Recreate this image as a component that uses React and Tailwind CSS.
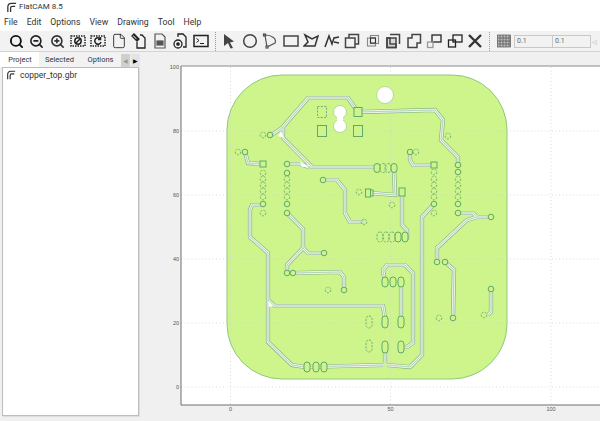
import React from "react";
import { Search, ZoomIn, ZoomOut, File } from "lucide-react";

/* ---------------- Board data (page coordinates) ---------------- */
const traces = [
  "270,136 282,128 308,98 348,98 358,112 435,110 443,120 441,140 458,157 458,165",
  "283,127 283,138 312,167 377,167",
  "394,168 395,195 370,193",
  "245,152 248,163 262,164",
  "263,205 252,205 250,210 250,237 268,253 268,342 292,365 305,367 383,365",
  "387,365 410,367 422,355 422,217 433,205",
  "268,300 275,306 383,306 385,318",
  "287,164 300,164 309,167",
  "323,180 337,180 345,190 345,213 350,222 364,222",
  "287,213 303,229 303,248 287,265 287,273",
  "303,248 308,253 324,253",
  "293,273 340,272 344,277 344,290",
  "402,192 402,225 407,230 407,240",
  "385,282 383,270 387,265 405,265 413,273 413,343 407,347 400,347",
  "401,282 401,322",
  "385,347 385,363",
  "458,213 473,213 477,217 491,217",
  "477,217 467,220 437,248 437,262",
  "445,262 454,270 453,318",
  "491,289 491,312 488,315",
  "410,152 410,160 413,165 433,165",
];

const solidPads = [
  [270, 135], [245, 152], [287, 164], [287, 173], [287, 204], [287, 213], [263, 204],
  [323, 180], [458, 165], [458, 172], [458, 204], [458, 213], [491, 217],
  [434, 204], [410, 152], [287, 273], [293, 273], [324, 253], [344, 290], [437, 262],
  [445, 262], [453, 318], [491, 289],
];

const dashedPads = [
  [263, 135], [238, 152], [263, 173], [263, 179], [263, 185], [263, 191], [263, 197], [263, 213],
  [287, 179], [287, 185], [287, 191], [287, 197], [434, 172], [434, 179], [434, 185], [434, 191],
  [434, 197], [434, 213], [458, 179], [458, 185], [458, 191], [458, 197], [448, 136], [416, 152],
  [364, 222], [359, 192], [392, 205], [328, 290], [439, 318], [484, 315],
];

// x, y, height
const solidOvals = [
  [307, 367, 10], [316, 367, 10], [324, 367, 10], [377, 168, 9], [394, 168, 9],
  [398, 237, 10], [405, 237, 10], [385, 282, 10], [393, 282, 10], [401, 282, 10],
  [385, 322, 12], [401, 322, 12], [385, 347, 12], [401, 347, 12],
];

const dashedOvals = [
  [380, 237, 10], [386, 237, 10], [392, 237, 10], [383, 168, 9], [388, 168, 9],
  [369, 322, 12], [369, 346, 12],
];

const rects = [
  [322, 131, 9, 11], [358, 131, 9, 11], [358, 112, 8, 9], [263, 164, 6, 6], [434, 165, 6, 6],
  [370, 193, 6, 6], [402, 192, 6, 8], [368, 193, 5, 8],
];

const gridX = [230.5, 390.5, 551];
const gridY = [131, 195, 259, 323, 387];

/* ---------------- Plot ---------------- */
function Plot() {
  return (
    <svg viewBox="141 52 459 369" className="h-[369px] w-[459px] shrink-0">
      <rect x="181" y="66" width="419" height="339" fill="#ffffff" />
      <path
        d="M282 75H452A55 55 0 0 1 507 130V324A55 55 0 0 1 452 379H282A55 55 0 0 1 227 324V130A55 55 0 0 1 282 75Z"
        fill="#cdf58c"
        stroke="#90c97c"
        strokeWidth="1"
      />
      <g stroke="#d0d0d0" strokeWidth="0.8" strokeDasharray="1 2.5" fill="none">
        {gridX.map((x) => (
          <path key={x} d={`M${x} 67V405`} />
        ))}
        {gridY.map((y) => (
          <path key={y} d={`M181 ${y}H600`} />
        ))}
      </g>

      {/* mounting holes */}
      <circle cx="385" cy="95" r="8.5" fill="#ffffff" stroke="#9ccf86" strokeWidth="0.7" />
      <circle cx="340" cy="112" r="6.5" fill="#ffffff" stroke="#9ccf86" strokeWidth="0.7" />
      <circle cx="340" cy="126" r="6.5" fill="#ffffff" stroke="#9ccf86" strokeWidth="0.7" />
      <rect x="337" y="117" width="6" height="4" fill="#ffffff" />

      {/* copper isolation */}
      <g fill="none" strokeLinejoin="miter">
        {traces.map((t) => (
          <polyline key={t} points={t} stroke="#7fb085" strokeWidth="4.2" />
        ))}
        {traces.map((t) => (
          <polyline key={t} points={t} stroke="#eef7e6" strokeWidth="2.9" />
        ))}
        {traces.map((t) => (
          <polyline key={t} points={t} stroke="#a4c6a8" strokeWidth="0.8" />
        ))}
      </g>
      <g fill="#ffffff">
        <path d="M281 131L284 138 278 136Z" />
        <path d="M300 161L308 167 302 167Z" />
        <path d="M268 301L273 306 269 307Z" />
      </g>

      <g fill="#cdf58c" stroke="#63a867" strokeWidth="1">
        {rects.map(([x, y, w, h]) => (
          <rect key={`${x}-${y}`} x={x - w / 2} y={y - h / 2} width={w} height={h} />
        ))}
        {solidPads.map(([x, y]) => (
          <circle key={`${x}-${y}`} cx={x} cy={y} r="2.8" />
        ))}
        {solidOvals.map(([x, y, h]) => (
          <rect key={`${x}-${y}`} x={x - 3} y={y - h / 2} width="6" height={h} rx="3" />
        ))}
      </g>
      <g fill="none" stroke="#6fae72" strokeWidth="1" strokeDasharray="2 1.4">
        {dashedPads.map(([x, y]) => (
          <circle key={`${x}-${y}`} cx={x} cy={y} r="2.8" />
        ))}
        {dashedOvals.map(([x, y, h]) => (
          <rect key={`${x}-${y}`} x={x - 3} y={y - h / 2} width="6" height={h} rx="3" />
        ))}
        <rect x="317.5" y="106.5" width="9" height="11" />
      </g>

      {/* axes */}
      <path d="M181 66V405H600" fill="none" stroke="#6e6e6e" strokeWidth="1" />
      <path d="M181 66H600" fill="none" stroke="#8a8a8a" strokeWidth="1" />
      <g fill="#555555" fontSize="5.5" fontFamily="'Liberation Sans', sans-serif">
        {[["100", 67], ["80", 131], ["60", 195], ["40", 259], ["20", 323], ["0", 387]].map(([l, y]) => (
          <text key={l} x="179" y={y + 2} textAnchor="end">{l}</text>
        ))}
        {[["0", 230.5], ["50", 390.5], ["100", 551]].map(([l, x]) => (
          <text key={l} x={x} y="411" textAnchor="middle">{l}</text>
        ))}
      </g>
    </svg>
  );
}

/* ---------------- Toolbar glyphs ---------------- */
const Svg = ({ children, s = 1.5, c = "#222222" }) => (
  <svg viewBox="0 0 16 16" className="h-4 w-4" fill="none" stroke={c} strokeWidth={s}>
    {children}
  </svg>
);

const tools = [
  <Search key="z" size={15} strokeWidth={3} color="#111111" />,
  <ZoomOut key="zo" size={15} strokeWidth={2.6} color="#222222" />,
  <ZoomIn key="zi" size={15} strokeWidth={2.6} color="#333333" />,
  <Svg key="r1">
    <rect x="1" y="3" width="14" height="10" strokeDasharray="1.5 1" />
    <circle cx="8" cy="8" r="3.2" />
    <path d="M6 10l4-4" />
  </Svg>,
  <Svg key="r2">
    <rect x="1" y="3" width="14" height="10" strokeDasharray="1.5 1" />
    <path d="M10.5 6A3.2 3.2 0 1 0 11 9M10.5 4v2.5H8" />
  </Svg>,
  <File key="f" size={16} strokeWidth={1.3} color="#222222" />,
  <Svg key="e" s={1.3}>
    <path d="M6 4V15H14V5L11 2H9M2 1l6 6M1 3l2-2 5 5-2 2Z" />
  </Svg>,
  <Svg key="o" s={1.2} c="#555555">
    <path d="M3 1H10L13 4V15H3Z" />
    <rect x="5" y="8" width="6" height="4" fill="#555555" />
  </Svg>,
  <Svg key="c" s={1.3}>
    <path d="M6 4V1H11L14 4V14H11" />
    <circle cx="6" cy="11" r="4" />
    <circle cx="6" cy="11" r="1.2" fill="#222222" />
  </Svg>,
  <Svg key="t">
    <rect x="1" y="2.5" width="14" height="11" />
    <path d="M3.5 5.5L6 7.5 3.5 9.5M7 10.5H11" strokeWidth="1" />
  </Svg>,
];

const drawTools = [
  <svg key="a" viewBox="0 0 16 16" className="h-4 w-4"><path d="M3 1L13 8.5 9 9.5 12 15 9.5 15.5 7 10 3 13Z" fill="#444444" /></svg>,
  <Svg key="ci" c="#444444"><circle cx="8" cy="8" r="6.3" /></Svg>,
  <Svg key="ar" s={1.2} c="#555555">
    <path d="M3 2C10 2 15 6 13 10L5 14Z" />
    <rect x="1.5" y="1" width="2" height="2" fill="#ffffff" />
    <rect x="4" y="13" width="2" height="2" fill="#ffffff" />
  </Svg>,
  <Svg key="re" c="#444444"><rect x="1" y="3" width="14" height="10" /></Svg>,
  <Svg key="po" c="#333333"><path d="M2 2L9 6 15 3 12 13H1L5 9Z" /></Svg>,
  <Svg key="pa" c="#333333"><path d="M1 14L5 3 8 11 10 5 15 4M10 9L15 10" /></Svg>,
  <Svg key="u" c="#444444"><path d="M5 5V1.5H14.5V11H11M1.5 5H11V14.5H1.5Z" /></Svg>,
  <Svg key="i" s={1.1} c="#888888"><rect x="2.5" y="5" width="8" height="8" /><rect x="5.5" y="2.5" width="8" height="8" /><rect x="5.5" y="5" width="5" height="5" stroke="#333333" /></Svg>,
  <Svg key="s" c="#444444"><rect x="2" y="5" width="9" height="9.5" fill="#d8d8d8" /><path d="M2 5H5V11H11V14.5H2ZM5 1.5H14.5V11" /></Svg>,
  <Svg key="s2" c="#444444"><path d="M2 5H6V1.5H14.5V10H11V14.5H2Z" /></Svg>,
  <Svg key="co" s={1.3}><rect x="6" y="2" width="9" height="7" /><rect x="1.5" y="9" width="5.5" height="5.5" stroke="#999999" /></Svg>,
  <Svg key="co2" s={1.3}><rect x="6" y="2" width="9" height="7" /><rect x="1.5" y="7" width="7" height="7" /></Svg>,
  <Svg key="x" s={2.4} c="#333333"><path d="M2 2L14 14M14 2L2 14" /></Svg>,
];

const Logo = ({ className }) => (
  <svg viewBox="0 0 12 12" className={className} fill="none" stroke="#333333" strokeWidth="1.4">
    <path d="M2 11V5.5C2 3 3.5 1.5 6 1.5H11M5 11V6.5C5 5.3 5.6 4.7 7 4.7H10" />
  </svg>
);

const ToolBtn = ({ children }) => (
  <div className="flex h-full w-[20.5px] shrink-0 items-center justify-center">{children}</div>
);

const Sep = () => <div className="mx-[3.5px] h-[19px] w-px shrink-0 border-l border-dotted border-[#999999]" />;

export default function App() {
  return (
    <div
      className="flex h-[421px] w-[600px] flex-col overflow-hidden bg-[#f0f0f0] text-[#333333]"
      style={{ fontFamily: "Roboto, 'Noto Sans', sans-serif" }}
    >
      {/* ---------- Title ---------- */}
      <div className="flex h-[14px] items-center gap-[2px] bg-white pl-[6px] text-[8px]">
        <Logo className="h-[11px] w-[11px]" />
        <span>FlatCAM 8.5</span>
      </div>

      {/* ---------- Menu ---------- */}
      <div className="flex h-[17px] items-center gap-[9px] bg-white pl-[4px] text-[8.7px]">
        {["File", "Edit", "Options", "View", "Drawing", "Tool", "Help"].map((m) => (
          <span key={m}>{m}</span>
        ))}
      </div>

      {/* ---------- Toolbar ---------- */}
      <div className="flex h-[21px] items-center border-b border-[#d4d4d4] bg-[#f2f2f2] pl-[6px]">
        {tools.map((t, i) => (
          <ToolBtn key={i}>{t}</ToolBtn>
        ))}
        <Sep />
        {drawTools.map((t, i) => (
          <ToolBtn key={i}>{t}</ToolBtn>
        ))}
        <Sep />
        <ToolBtn>
          <Svg s={0.7} c="#555555">
            <rect x="1.5" y="2" width="13" height="12" fill="#bbbbbb" />
            <path d="M4 2V14M7 2V14M10 2V14M13 2V14M1.5 5H14.5M1.5 8H14.5M1.5 11H14.5" />
          </Svg>
        </ToolBtn>
        <div className="flex h-[13px] w-[39px] shrink-0 items-center border border-[#c8c8c8] pl-[2px] text-[7px] text-[#666666]">0.1</div>
        <div className="flex h-[13px] w-[38px] shrink-0 items-center border border-l-0 border-[#c8c8c8] pl-[2px] text-[7px] text-[#666666]">0.1</div>
        <span className="ml-[1px] text-[6px] text-[#aaaaaa]">◁</span>
      </div>

      {/* ---------- Body ---------- */}
      <div className="flex flex-1">
        <div className="flex w-[141px] shrink-0 flex-col">
          <div className="flex h-[15px] items-end text-[7.5px]">
            <div className="flex h-[15px] w-[39px] items-center justify-center bg-white pl-[1px]">Project</div>
            <div className="flex h-[14px] w-[41px] items-center justify-center bg-[#f2f2f2]">Selected</div>
            <div className="flex h-[14px] w-[41px] items-center justify-center bg-[#f2f2f2]">Options</div>
            <div className="flex h-[13px] w-[9px] items-center justify-center bg-[#cfcfcf] text-[6px] text-[#999999]">◀</div>
            <div className="ml-px flex h-[13px] w-[9px] items-center justify-center bg-[#e4e4e4] text-[6px] text-black">▶</div>
          </div>
          <div className="ml-[2px] h-[349px] w-[137px] border border-[#bdbdbd] bg-white pl-[3px] pt-[1px] shadow-[1px_1px_0_#dddddd]">
            <div className="flex items-center gap-[4px] text-[8.5px]">
              <Logo className="h-[10px] w-[10px]" />
              <span>copper_top.gbr</span>
            </div>
          </div>
        </div>
        <Plot />
      </div>
    </div>
  );
}
